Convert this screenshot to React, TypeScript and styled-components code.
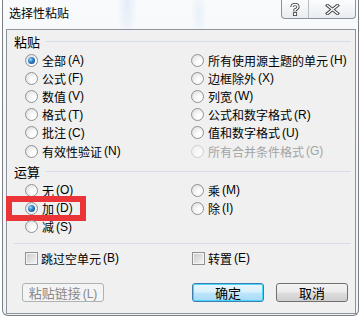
import React from "react";
import styled, {createGlobalStyle, css} from "styled-components";

const GlobalStyle = createGlobalStyle`
  html, body {
    margin: 0;
    padding: 0;
    background: #ffffff;
  }
  body {
    font-family: "Noto Sans CJK SC", "Liberation Sans", sans-serif;
    font-size: 12px;
    color: #000;
  }
`;

const Window = styled.div`
  box-sizing: border-box;
  margin-left: 2px;
  width: 357px;
  height: 316px;
  display: flex;
  flex-direction: column;
  border: 1px solid #7a7f86;
  border-top: none;
  border-radius: 0 0 6px 6px;
  background:
    radial-gradient(ellipse 10px 36px at 124px 6px, rgba(196, 218, 240, 0.4), transparent),
    radial-gradient(ellipse 8px 26px at 196px 14px, rgba(204, 224, 244, 0.35), transparent),
    linear-gradient(#f8fafc, #eff2f6);
  overflow: hidden;
`;

const TitleBar = styled.div`
  height: 29px;
  flex: none;
  display: flex;
  align-items: flex-start;
`;

const Title = styled.div`
  padding: 5px 0 0 6px;
  font-size: 12px;
  line-height: 16px;
  color: #000;
`;

const Caption = styled.div`
  margin-left: auto;
  margin-right: 2px;
  display: flex;
  height: 18px;
  border: 1px solid #8d939a;
  border-top: none;
  border-radius: 0 0 4px 4px;
  background: linear-gradient(#fbfcfd, #e9edf1);
  overflow: hidden;
`;

const CaptionButton = styled.div<{ $w: number }>`
  width: ${p => p.$w}px;
  display: flex;
  align-items: center;
  justify-content: center;
  & + & {
    border-left: 1px solid #b9bec4;
  }
`;

const Client = styled.div`
  box-sizing: border-box;
  margin-left: 3px;
  width: 350px;
  height: 285px;
  flex: none;
  border: 1px solid #8e949b;
  background: #f0f0f0;
  padding: 4px 4px 0 7px;
  display: flex;
  flex-direction: column;
`;

const GroupLabel = styled.div`
  display: flex;
  align-items: center;
  height: 16px;
  line-height: 16px;
  font-size: 13px;
  &::after {
    content: "";
    flex: 1;
    margin-left: 6px;
    margin-top: -1px;
    border-top: 1px solid #d5dce3;
  }
`;

const OptionGrid = styled.div<{ $after: number }>`
  margin: 1px 0 ${p => p.$after}px 11px;
  display: grid;
  grid-template-columns: 166px 1fr;
  grid-auto-rows: 18.2px;
`;

const Option = styled.label<{ $disabled?: boolean }>`
  position: relative;
  display: flex;
  align-items: center;
  white-space: nowrap;
  color: ${p => (p.$disabled ? "#a3a3a3" : "#000")};
`;

const Radio = styled.span<{ $checked?: boolean; $disabled?: boolean }>`
  position: relative;
  box-sizing: border-box;
  width: 13px;
  height: 13px;
  flex: none;
  margin-right: 4px;
  border-radius: 50%;
  border: 1px solid #8f9294;
  background: radial-gradient(circle at 70% 70%, #ffffff 20%, #dedede 90%);
  ${p =>
    p.$disabled &&
    css`
      border-color: #cdcfd1;
      background: radial-gradient(circle at 70% 70%, #fafafa 20%, #eeeeee 90%);
    `}
  ${p =>
    p.$checked &&
    css`
      &::after {
        content: "";
        position: absolute;
        left: 2px;
        top: 2px;
        width: 7px;
        height: 7px;
        border-radius: 50%;
        background: radial-gradient(circle at 35% 35%, #a6dcf7 0, #3d8fcf 35%, #0f4f93 80%);
      }
    `}
`;

const Key = styled.span`
  margin-left: 2px;
  font-family: "Liberation Sans", sans-serif;
  font-size: 12px;
`;

const Separator = styled.div`
  margin: 7px 0 0 0;
  border-top: 1px solid #d5dce3;
`;

const CheckRow = styled.div`
  margin: 6px 0 0 11px;
  height: 17px;
  display: grid;
  grid-template-columns: 167px 1fr;
`;

const Check = styled.span`
  box-sizing: border-box;
  width: 13px;
  height: 13px;
  flex: none;
  margin-right: 3px;
  border: 1px solid #8f9294;
  box-shadow: inset 0 0 0 1px #f4f4f4;
  background: linear-gradient(135deg, #c9c9c9, #f6f6f6);
`;

const ButtonRow = styled.div`
  margin: 16px 3px 0 8px;
  display: flex;
  gap: 12px;
`;

const Button = styled.button<{ $w: number; $variant?: "default" | "disabled" }>`
  box-sizing: border-box;
  width: ${p => p.$w}px;
  height: 19px;
  padding: 0;
  border-radius: 3px;
  font-family: inherit;
  font-size: 13px;
  line-height: 17px;
  color: #000;
  border: 1px solid #707070;
  background: linear-gradient(#f2f2f2 0%, #ebebeb 48%, #dddddd 52%, #cfcfcf 100%);
  ${p =>
    p.$variant === "default" &&
    css`
      border-color: #3c7fb1;
      box-shadow: inset 0 0 0 1px #48d7f9;
      background: linear-gradient(#eaf6fd 0%, #d9f0fc 48%, #bee6fd 52%, #a7d9f5 100%);
    `}
  ${p =>
    p.$variant === "disabled" &&
    css`
      border-color: #adb2b5;
      color: #8a8a8a;
      background: #f4f4f4;
    `}
  &:first-child {
    margin-right: auto;
  }
`;

const Highlight = styled.span`
  position: absolute;
  left: -19px;
  top: -3px;
  width: 80px;
  height: 25px;
  box-sizing: border-box;
  border: 6px solid #eb3438;
  pointer-events: none;
`;

type Opt = { text: string; key: string; checked?: boolean; disabled?: boolean; marked?: boolean } | null;

const pasteOptions: Opt[] = [
  {text: "全部", key: "A", checked: true},
  {text: "所有使用源主题的单元", key: "H"},
  {text: "公式", key: "F"},
  {text: "边框除外", key: "X"},
  {text: "数值", key: "V"},
  {text: "列宽", key: "W"},
  {text: "格式", key: "T"},
  {text: "公式和数字格式", key: "R"},
  {text: "批注", key: "C"},
  {text: "值和数字格式", key: "U"},
  {text: "有效性验证", key: "N"},
  {text: "所有合并条件格式", key: "G", disabled: true},
];

const opOptions: Opt[] = [
  {text: "无", key: "O"},
  {text: "乘", key: "M"},
  {text: "加", key: "D", checked: true, marked: true},
  {text: "除", key: "I"},
  {text: "减", key: "S"},
  null,
];

const OptionList = ({items, after}: { items: Opt[]; after: number }) => (
  <OptionGrid $after={after}>
    {items.map((o, i) =>
      o ? (
        <Option key={i} $disabled={o.disabled}>
          <Radio $checked={o.checked} $disabled={o.disabled}/>
          {o.text}
          <Key>({o.key})</Key>
          {o.marked && <Highlight/>}
        </Option>
      ) : (
        <span key={i}/>
      )
    )}
  </OptionGrid>
);

const HelpIcon = () => (
  <svg width="10" height="13" viewBox="0 0 10 13">
    <path d="M2 4 Q2 1.5 5 1.5 Q8 1.5 8 4 Q8 5.5 5 7 L5 8.5" fill="none" stroke="#4a4a4a" strokeWidth="3.2"/>
    <path d="M2 4 Q2 1.5 5 1.5 Q8 1.5 8 4 Q8 5.5 5 7 L5 8.5" fill="none" stroke="#ffffff" strokeWidth="1.4"/>
    <rect x="3.4" y="9.6" width="3.2" height="3" fill="#ffffff" stroke="#4a4a4a" strokeWidth="0.9"/>
  </svg>
);

const CloseIcon = () => (
  <svg width="15" height="11" viewBox="0 0 15 11">
    <path d="M2.5 1.5 L12.5 9.5 M12.5 1.5 L2.5 9.5" stroke="#4a4a4a" strokeWidth="3.4" strokeLinecap="square"/>
    <path d="M2.5 1.5 L12.5 9.5 M12.5 1.5 L2.5 9.5" stroke="#ffffff" strokeWidth="1.4" strokeLinecap="square"/>
  </svg>
);

const App = () => (
  <>
    <GlobalStyle/>
    <Window>
      <TitleBar>
        <Title>选择性粘贴</Title>
        <Caption>
          <CaptionButton $w={26}><HelpIcon/></CaptionButton>
          <CaptionButton $w={46}><CloseIcon/></CaptionButton>
        </Caption>
      </TitleBar>
      <Client>
        <GroupLabel>粘贴</GroupLabel>
        <OptionList items={pasteOptions} after={4}/>
        <GroupLabel>运算</GroupLabel>
        <OptionList items={opOptions} after={0}/>
        <Separator/>
        <CheckRow>
          <Option><Check/>跳过空单元<Key>(B)</Key></Option>
          <Option><Check/>转置<Key>(E)</Key></Option>
        </CheckRow>
        <ButtonRow>
          <Button $w={82} $variant="disabled">粘贴链接<Key>(L)</Key></Button>
          <Button $w={72} $variant="default">确定</Button>
          <Button $w={72}>取消</Button>
        </ButtonRow>
      </Client>
    </Window>
  </>
);

export default App;
